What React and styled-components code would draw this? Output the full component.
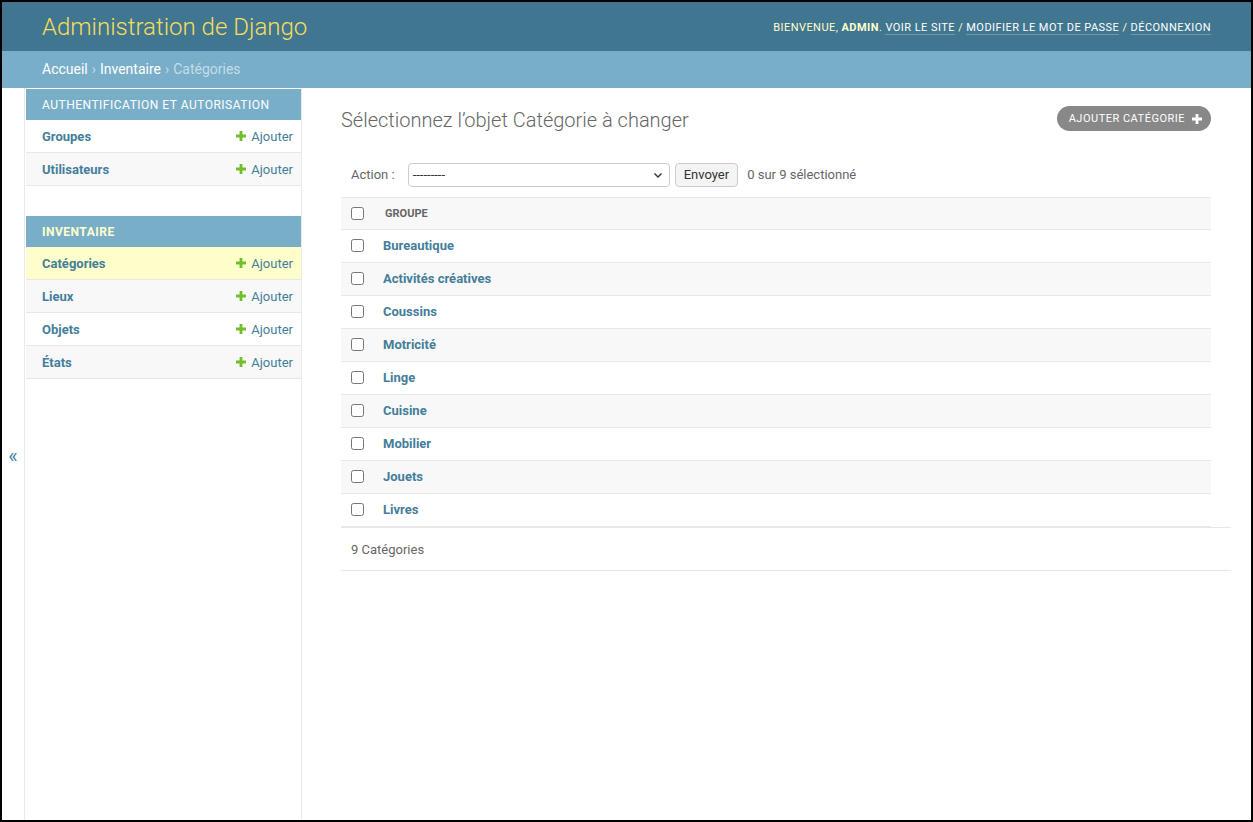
import React from "react";
import styled, { createGlobalStyle } from "styled-components";

const GlobalStyle = createGlobalStyle`
  html, body {
    margin: 0;
    padding: 0;
  }
  body {
    font-family: Roboto, "Liberation Sans", Arial, sans-serif;
    font-size: 14px;
    color: #333;
    background: #fff;
  }
  * {
    box-sizing: border-box;
  }
`;

const Frame = styled.div`
  height: 822px;
  border: 2px solid #000;
  display: flex;
  flex-direction: column;
  overflow: hidden;
`;

const Header = styled.header`
  height: 49px;
  flex: none;
  padding: 0 40px;
  background: #417690;
  display: flex;
  align-items: center;
  justify-content: space-between;
`;

const Branding = styled.div`
  font-size: 24px;
  font-weight: 300;
  color: #f5dd5d;
  line-height: 28px;
`;

const UserTools = styled.div`
  font-size: 11px;
  letter-spacing: 0.45px;
  text-transform: uppercase;
  color: #ffc;
  line-height: 13px;
  padding-top: 2px;
  white-space: nowrap;

  strong {
    font-weight: 700;
  }
`;

const ToolLink = styled.a`
  color: #fff;
  text-decoration: none;
  border-bottom: 1px solid rgba(255, 255, 255, 0.25);
`;

const Breadcrumbs = styled.nav`
  height: 37px;
  flex: none;
  padding: 0 40px 1px;
  background: #79aec8;
  color: #c4dce8;
  font-size: 14px;
  display: flex;
  align-items: center;
  gap: 4px;
`;

const Crumb = styled.a`
  color: #fff;
  text-decoration: none;
`;

const Main = styled.div`
  flex: 1;
  display: flex;
  min-height: 0;
`;

const Toggle = styled.button`
  width: 23px;
  flex: none;
  border: none;
  border-right: 1px solid #eaeaea;
  background: #fff;
  color: #447e9b;
  font-family: inherit;
  font-size: 20px;
  padding: 4px 0 0;
  display: flex;
  align-items: center;
  justify-content: center;
  cursor: pointer;
`;

const Sidebar = styled.nav`
  width: 277px;
  flex: none;
  padding: 1px 0 0 1px;
  border-right: 1px solid #eaeaea;
`;

const Module = styled.div`
  margin-bottom: 30px;
`;

const Caption = styled.div`
  height: 31px;
  padding: 0 16px;
  display: flex;
  align-items: center;
  white-space: nowrap;
  background: #79aec8;
  color: ${({ $current }) => ($current ? "#ffc" : "#fff")};
  font-weight: ${({ $current }) => ($current ? 700 : 400)};
  font-size: 12px;
  letter-spacing: 0.5px;
  text-transform: uppercase;
`;

const ModelRow = styled.div`
  height: 33px;
  padding: 0 8px 0 16px;
  display: flex;
  align-items: center;
  justify-content: space-between;
  border-bottom: 1px solid #e8e8e8;
  background: ${({ $bg }) => $bg};
  font-size: 13px;
`;

const ModelLink = styled.a`
  color: #447e9b;
  font-weight: 700;
  text-decoration: none;
`;

const AddLink = styled.a`
  color: #447e9b;
  text-decoration: none;
  display: inline-flex;
  align-items: center;
  gap: 5px;
`;

const Content = styled.main`
  flex: 1;
  padding: 20px 20px 20px 39px;
  min-width: 0;
`;

const TitleRow = styled.div`
  display: flex;
  justify-content: space-between;
  align-items: flex-start;
  padding-right: 20px;
  margin-bottom: 20px;
`;

const Title = styled.h1`
  margin: 0;
  font-size: 20px;
  font-weight: 300;
  line-height: 24px;
  color: #666;
`;

const ObjectTool = styled.a`
  margin-top: -2px;
  height: 25px;
  padding: 0 9px 0 12px;
  border-radius: 15px;
  background: #888;
  color: #fff;
  font-size: 11px;
  letter-spacing: 0.5px;
  text-transform: uppercase;
  text-decoration: none;
  display: inline-flex;
  align-items: center;
  gap: 7px;
`;

const Actions = styled.div`
  height: 45px;
  margin-right: 20px;
  padding: 0 10px;
  display: flex;
  align-items: center;
  font-size: 13px;
  color: #666;
`;

const ActionLabel = styled.span`
  margin-right: 13px;
  color: #666;
`;

const SelectBox = styled.div`
  width: 262px;
  height: 24px;
  border: 1px solid #ccc;
  border-radius: 4px;
  padding: 0 6px 0 4px;
  display: flex;
  align-items: center;
  justify-content: space-between;
  color: #333;
  font-size: 13px;
  background: #fff;
`;

const Button = styled.button`
  margin-left: 5px;
  height: 24px;
  padding: 0 8px;
  border: 1px solid #ccc;
  border-radius: 4px;
  background: #f4f4f4;
  color: #333;
  font-family: inherit;
  font-size: 13px;
`;

const Counter = styled.span`
  margin-left: 9px;
  color: #666;
`;

const Results = styled.div`
  margin-right: 20px;
`;

const HeadRow = styled.div`
  height: 33px;
  display: flex;
  align-items: center;
  background: #f8f8f8;
  border-top: 1px solid #e8e8e8;
  border-bottom: 1px solid #e8e8e8;
`;

const HeadCell = styled.div`
  padding-left: 10px;
  font-size: 11px;
  font-weight: 700;
  color: #666;
  text-transform: uppercase;
`;

const Row = styled.div`
  height: 33px;
  padding-bottom: 1px;
  display: flex;
  align-items: center;
  background: ${({ $bg }) => $bg};
  border-bottom: 1px solid #e8e8e8;
`;

const CheckCell = styled.div`
  width: 34px;
  flex: none;
  padding-left: 10px;
  display: flex;
  align-items: center;
`;

const Check = styled.input`
  margin: 0;
  width: 13px;
  height: 13px;
`;

const RowLink = styled.a`
  padding-left: 8px;
  font-size: 13px;
  font-weight: 700;
  color: #447e9b;
  text-decoration: none;
`;

const Paginator = styled.div`
  height: 44px;
  padding: 0 10px;
  display: flex;
  align-items: center;
  border-top: 1px solid #e8e8e8;
  border-bottom: 1px solid #e8e8e8;
  font-size: 13px;
  color: #666;
`;

const Plus = ({ color, size = 10 }) => (
  <svg width={size} height={size} viewBox="0 0 10 10">
    <path d="M3.6 0h2.8v3.6H10v2.8H6.4V10H3.6V6.4H0V3.6h3.6z" fill={color} />
  </svg>
);

const Chevron = () => (
  <svg width="10" height="10" viewBox="0 0 10 10">
    <path d="M1.5 3.5 5 7l3.5-3.5" fill="none" stroke="#333" strokeWidth="1.4" />
  </svg>
);

const apps = [
  {
    name: "Authentification et autorisation",
    models: ["Groupes", "Utilisateurs"],
  },
  {
    name: "Inventaire",
    current: true,
    models: ["Catégories", "Lieux", "Objets", "États"],
  },
];

const categories = [
  "Bureautique",
  "Activités créatives",
  "Coussins",
  "Motricité",
  "Linge",
  "Cuisine",
  "Mobilier",
  "Jouets",
  "Livres",
];

const stripe = (i) => (i % 2 === 0 ? "#fff" : "#f8f8f8");

export default function App() {
  return (
    <>
      <GlobalStyle />
      <Frame>
        <Header>
          <Branding>Administration de Django</Branding>
          <UserTools>
            Bienvenue, <strong>admin</strong>.{" "}
            <ToolLink href="#">Voir le site</ToolLink> /{" "}
            <ToolLink href="#">Modifier le mot de passe</ToolLink> /{" "}
            <ToolLink href="#">Déconnexion</ToolLink>
          </UserTools>
        </Header>
        <Breadcrumbs>
          <Crumb href="#">Accueil</Crumb> › <Crumb href="#">Inventaire</Crumb> ›{" "}
          <span>Catégories</span>
        </Breadcrumbs>
        <Main>
          <Toggle>«</Toggle>
          <Sidebar>
            {apps.map((app) => (
              <Module key={app.name}>
                <Caption $current={app.current}>{app.name}</Caption>
                {app.models.map((m, i) => (
                  <ModelRow
                    key={m}
                    $bg={m === "Catégories" ? "#ffc" : stripe(i)}
                  >
                    <ModelLink href="#">{m}</ModelLink>
                    <AddLink href="#">
                      <Plus color="#70bf2b" />
                      Ajouter
                    </AddLink>
                  </ModelRow>
                ))}
              </Module>
            ))}
          </Sidebar>
          <Content>
            <TitleRow>
              <Title>Sélectionnez l’objet Catégorie à changer</Title>
              <ObjectTool href="#">
                Ajouter catégorie
                <Plus color="#fff" />
              </ObjectTool>
            </TitleRow>
            <Actions>
              <ActionLabel>Action :</ActionLabel>
              <SelectBox>
                <span>---------</span>
                <Chevron />
              </SelectBox>
              <Button>Envoyer</Button>
              <Counter>0 sur 9 sélectionné</Counter>
            </Actions>
            <Results>
              <HeadRow>
                <CheckCell>
                  <Check type="checkbox" />
                </CheckCell>
                <HeadCell>Groupe</HeadCell>
              </HeadRow>
              {categories.map((c, i) => (
                <Row key={c} $bg={stripe(i)}>
                  <CheckCell>
                    <Check type="checkbox" />
                  </CheckCell>
                  <RowLink href="#">{c}</RowLink>
                </Row>
              ))}
            </Results>
            <Paginator>9 Catégories</Paginator>
          </Content>
        </Main>
      </Frame>
    </>
  );
}
